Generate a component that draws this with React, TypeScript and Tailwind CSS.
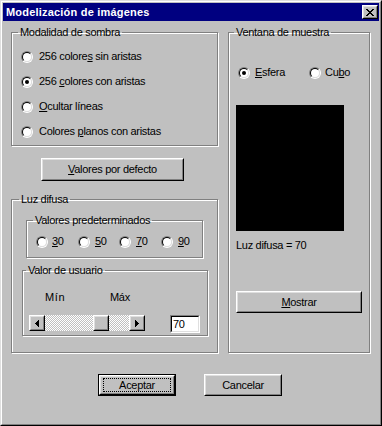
import React from "react";

function U({ children }: { children: React.ReactNode }) {
  return <span className="underline underline-offset-[1px]">{children}</span>;
}

function Radio({ checked }: { checked?: boolean }) {
  return (
    <span className="block w-[12px] h-[12px] shrink-0 rounded-full border border-t-[#808080] border-l-[#808080] border-b-white border-r-white">
      <span className="flex w-full h-full items-center justify-center rounded-full border border-t-black border-l-black border-b-[#dfdfdf] border-r-[#dfdfdf] bg-white">
        {checked && <span className="block w-[4px] h-[4px] rounded-full bg-black" />}
      </span>
    </span>
  );
}

function RadioItem({
  checked,
  children,
  gap = "gap-[6px]",
  className = "",
}: {
  checked?: boolean;
  children: React.ReactNode;
  gap?: string;
  className?: string;
}) {
  return (
    <div className={`flex h-[13px] items-center ${gap} ${className}`}>
      <Radio checked={checked} />
      <span className="leading-[13px]">{children}</span>
    </div>
  );
}

function Group({
  title,
  className = "",
  legendClass = "ml-[6px]",
  children,
}: {
  title: string;
  className?: string;
  legendClass?: string;
  children?: React.ReactNode;
}) {
  return (
    <fieldset
      className={`border border-[#808080] shadow-[inset_1px_1px_0_#ffffff,1px_1px_0_#ffffff] p-0 m-0 min-w-0 flex flex-col ${className}`}
    >
      <legend className={`px-[2px] leading-[13px] ${legendClass}`}>{title}</legend>
      {children}
    </fieldset>
  );
}

function Raised({ className = "", children }: { className?: string; children?: React.ReactNode }) {
  return (
    <div className={`border border-t-white border-l-white border-b-black border-r-black bg-[#c0c0c0] ${className}`}>
      <div className="flex h-full w-full items-center justify-center border border-t-[#dfdfdf] border-l-[#dfdfdf] border-b-[#808080] border-r-[#808080]">
        {children}
      </div>
    </div>
  );
}

function Arrow({ dir }: { dir: "left" | "right" }) {
  return (
    <Raised className="w-[16px] h-[16px] shrink-0">
      <svg width="4" height="7" viewBox="0 0 4 7" shapeRendering="crispEdges">
        {dir === "left" ? (
          <g fill="#000">
            <rect x="0" y="3" width="1" height="1" />
            <rect x="1" y="2" width="1" height="3" />
            <rect x="2" y="1" width="1" height="5" />
            <rect x="3" y="0" width="1" height="7" />
          </g>
        ) : (
          <g fill="#000">
            <rect x="3" y="3" width="1" height="1" />
            <rect x="2" y="2" width="1" height="3" />
            <rect x="1" y="1" width="1" height="5" />
            <rect x="0" y="0" width="1" height="7" />
          </g>
        )}
      </svg>
    </Raised>
  );
}

function CloseGlyph() {
  const px: [number, number][] = [
    [0, 0], [1, 0], [6, 0], [7, 0],
    [1, 1], [2, 1], [5, 1], [6, 1],
    [2, 2], [3, 2], [4, 2], [5, 2],
    [3, 3], [4, 3],
    [2, 4], [3, 4], [4, 4], [5, 4],
    [1, 5], [2, 5], [5, 5], [6, 5],
    [0, 6], [1, 6], [6, 6], [7, 6],
  ];
  return (
    <svg width="8" height="7" viewBox="0 0 8 7" shapeRendering="crispEdges">
      {px.map(([x, y], i) => (
        <rect key={i} x={x} y={y} width="1" height="1" fill="#000" />
      ))}
    </svg>
  );
}

export default function App() {
  return (
    <div className="w-[382px] h-[426px] bg-[#c0c0c0] text-black text-[11px] tracking-[-0.3px] font-['Liberation_Sans',Arial,sans-serif] border border-t-[#dfdfdf] border-l-[#dfdfdf] border-b-black border-r-black">
      <div className="flex h-full w-full flex-col border border-t-white border-l-white border-b-[#808080] border-r-[#808080] p-px">
        {/* Title bar */}
        <div className="flex h-[18px] shrink-0 items-center justify-between bg-[#000080] pl-[3px] pr-[1px]">
          <span className="font-bold text-white tracking-[0.2px] leading-[13px]">Modelización de imágenes</span>
          <Raised className="w-[16px] h-[14px]">
            <CloseGlyph />
          </Raised>
        </div>

        {/* Body */}
        <div className="flex flex-col pl-[8px] pr-[9px] pt-[5px]">
          <div className="flex gap-[10px]">
            {/* Left column */}
            <div className="flex w-[207px] flex-col">
              <Group title="Modalidad de sombra" className="h-[120px]" legendClass="ml-[6px]">
                <div className="flex flex-col gap-[12px] pl-[9px] pt-[11px]">
                  <RadioItem>
                    256 colore<U>s</U> sin aristas
                  </RadioItem>
                  <RadioItem checked>
                    256 <U>c</U>olores con aristas
                  </RadioItem>
                  <RadioItem>
                    <U>O</U>cultar líneas
                  </RadioItem>
                  <RadioItem>
                    Colores <U>p</U>lanos con aristas
                  </RadioItem>
                </div>
              </Group>

              <Raised className="ml-[30px] mt-[12px] h-[23px] w-[143px]">
                <span className="leading-[13px]">
                  <U>V</U>alores por defecto
                </span>
              </Raised>

              <Group title="Luz difusa" className="mt-[12px] h-[160px]" legendClass="ml-[7px]">
                <Group
                  title="Valores predeterminados"
                  className="ml-[14px] mt-[8px] h-[44px] w-[177px]"
                  legendClass="ml-[6px]"
                >
                  <div className="flex pl-[9px] pt-[8px]">
                    <RadioItem className="w-[42px]" gap="gap-[4px]">
                      <U>3</U>0
                    </RadioItem>
                    <RadioItem className="w-[41px]" gap="gap-[5px]">
                      <U>5</U>0
                    </RadioItem>
                    <RadioItem className="w-[42px]" gap="gap-[5px]">
                      <U>7</U>0
                    </RadioItem>
                    <RadioItem gap="gap-[5px]">
                      <U>9</U>0
                    </RadioItem>
                  </div>
                </Group>

                <Group
                  title="Valor de usuario"
                  className="ml-[10px] mt-[6px] h-[72px] w-[186px]"
                  legendClass="ml-[3px]"
                >
                  <div className="flex h-[13px] items-center pt-[14px] box-content leading-[13px]">
                    <span className="ml-[22px] w-[65px] tracking-[0.6px]">Mín</span>
                    <span>Máx</span>
                  </div>
                  <div className="mt-[11px] flex items-start">
                    <div className="ml-[6px] flex h-[16px] w-[116px]">
                      <Arrow dir="left" />
                      <div className="flex flex-1 bg-[image:repeating-conic-gradient(#c0c0c0_0%_25%,#ffffff_0%_50%)] bg-[length:2px_2px] pl-[48px]">
                        <Raised className="h-[16px] w-[16px]" />
                      </div>
                      <Arrow dir="right" />
                    </div>
                    <div className="ml-[25px] h-[18px] w-[30px] border border-t-[#808080] border-l-[#808080] border-b-white border-r-white">
                      <div className="flex h-full w-full items-center border border-t-black border-l-black border-b-[#dfdfdf] border-r-[#dfdfdf] bg-white pl-[1px] leading-[13px]">
                        70
                      </div>
                    </div>
                  </div>
                </Group>
              </Group>
            </div>

            {/* Right column */}
            <Group title="Ventana de muestra" className="h-[327px] w-[142px]" legendClass="ml-[5px]">
              <div className="mt-[27px] flex pl-[9px]">
                <RadioItem checked className="w-[71px]" gap="gap-[5px]">
                  <U>E</U>sfera
                </RadioItem>
                <RadioItem gap="gap-[4px]">
                  Cu<U>b</U>o
                </RadioItem>
              </div>
              <div className="ml-[7px] mt-[26px] h-[126px] w-[108px] bg-black" />
              <div className="ml-[7px] mt-[8px] leading-[13px]">Luz difusa = 70</div>
              <Raised className="ml-[7px] mt-[39px] h-[22px] w-[126px]">
                <span className="leading-[13px]">
                  <U>M</U>ostrar
                </span>
              </Raised>
            </Group>
          </div>

          {/* Bottom buttons */}
          <div className="mt-[21px] flex justify-center gap-[28px] pr-[1px]">
            <div className="h-[22px] w-[78px] border border-black">
              <Raised className="h-full w-full">
                <div className="flex h-[14px] w-[68px] items-center justify-center border border-dotted border-black leading-[13px]">
                  Aceptar
                </div>
              </Raised>
            </div>
            <Raised className="h-[22px] w-[78px]">
              <span className="leading-[13px]">Cancelar</span>
            </Raised>
          </div>
        </div>
      </div>
    </div>
  );
}
